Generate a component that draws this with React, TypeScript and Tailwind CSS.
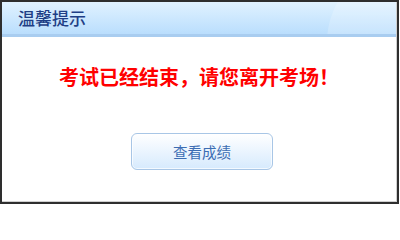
export default function App() {
  return (
    <div className="h-[205px] w-[400px] bg-white">
      <div
        className="flex h-[204px] w-[399px] flex-col border-2 border-[#2e2e2e]"
        style={{ fontFamily: '"Noto Sans CJK SC", "Noto Sans", sans-serif' }}
      >
        <div className="flex h-full flex-col border-b border-r border-[#cfcfcf]">
          {/* header bar with glossy sweep */}
          <div className="relative h-[35px] shrink-0 overflow-hidden border-b-[3px] border-[#a9cdf0] bg-gradient-to-b from-[#e0f2ff] to-[#badefd]">
            <div className="pointer-events-none absolute left-[325px] top-[-40px] h-[160px] w-[200px] rounded-full bg-white/20" />
            <div className="relative pl-[16px] pt-[5px] text-[17px] leading-[22px] font-medium text-[#1f3f86]">
              温馨提示
            </div>
          </div>

          <div className="flex flex-1 flex-col items-center">
            <p className="mt-[29px] text-[20px] leading-[22px] font-bold text-[#ff0000]">
              考试已经结束，请您离开考场！
            </p>
            <button className="ml-[6px] mt-[45px] h-[37px] w-[142px] rounded-[6px] border border-[#a8c6e6] bg-gradient-to-b from-white to-[#d6eafd] text-[14.5px] text-[#3c6db3] shadow-[inset_0_0_0_1px_rgba(255,255,255,0.7)]">
              查看成绩
            </button>
          </div>
        </div>
      </div>
    </div>
  );
}
